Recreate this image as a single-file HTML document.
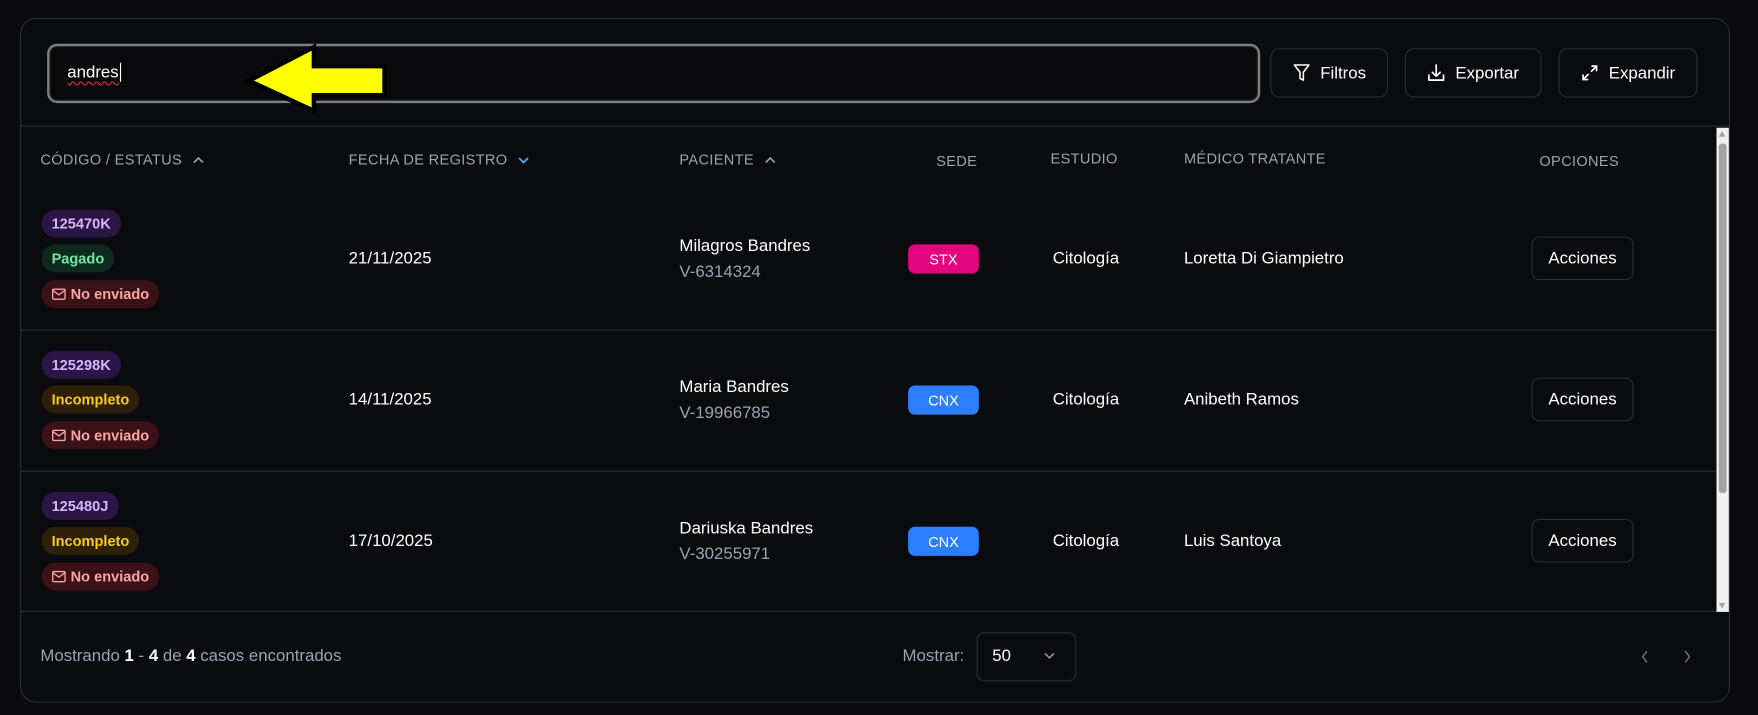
<!DOCTYPE html>
<html><head><meta charset="utf-8"><style>
*{box-sizing:border-box;margin:0;padding:0}
html,body{width:1758px;height:715px;overflow:hidden;background:#0a0a0c;font-family:"Liberation Sans",sans-serif;color:#fff}
#w{position:absolute;left:0;top:0;width:1568px;height:638px;transform:scale(1.12117,1.1207);transform-origin:0 0}
.card{position:absolute;left:18px;top:16px;width:1525px;height:611px;border:1px solid #2b2e35;border-radius:14px;background:#0a0b0e}
.abs{position:absolute}
.search{left:42px;top:39px;width:1082px;height:53px;border:2px solid #7d7f84;border-radius:9px;box-shadow:inset 0 0 0 1px #2a2c30;background:#09090b}
.stext{left:60px;top:56px;font-size:15px;color:#fff}
.stext span{text-decoration:underline wavy #e03030;text-underline-offset:3px;text-decoration-thickness:1px}
.btn{position:absolute;top:43px;height:44px;border:1px solid #2b2e35;border-radius:8px;font-size:15px;display:flex;align-items:center;justify-content:center;gap:9px;color:#fff}
.hl{position:absolute;left:19px;width:1512px;height:1px;background:#2b2e35}
.th{position:absolute;font-size:13px;color:#9ca3af;letter-spacing:.3px;display:flex;align-items:center}
.b{position:absolute;height:25px;border-radius:13px;font-size:13px;font-weight:bold;display:flex;align-items:center;padding:0 9px;gap:4px}
.code{background:#2a1545;color:#d8b4fe}
.pag{background:#0e2a1c;color:#6ee7a0}
.inc{background:#2e2008;color:#facc15}
.ne{background:#3a1116;color:#fca5a5}
.t15{position:absolute;font-size:15px;color:#fff}
.g{color:#9ca3af}
.sede{position:absolute;left:810px;width:63px;height:26px;border-radius:6px;font-size:13px;display:flex;align-items:center;justify-content:center;color:#fff}
.acc{position:absolute;left:1366px;width:91px;height:39px;border:1px solid #2b2e35;border-radius:7px;font-size:15px;display:flex;align-items:center;justify-content:center}
</style></head><body><div id="w">
<div class="card"></div>
<div class="abs search"></div>
<div class="abs stext"><span>andres</span><span style="text-decoration:none;border-left:1px solid #fff;margin-left:1px"></span></div>
<svg class="abs" style="left:215px;top:38px" width="135" height="66" viewBox="215 38 135 66"><polygon points="222,72 280,42 280,59 343,59 343,85 280,85 280,99" fill="#ffff00" stroke="#000" stroke-width="4" stroke-linejoin="miter"/></svg>
<div class="btn" style="left:1133px;width:105px"><svg width="16" height="18" viewBox="0 0 16 18" fill="none" stroke="#fff" stroke-width="1.4" stroke-linejoin="round"><path d="M1.5 2h13l-5 6.5v7l-3-1.5v-5.5z"/></svg>Filtros</div>
<div class="btn" style="left:1253px;width:122px"><svg width="16" height="18" viewBox="0 0 16 18" fill="none" stroke="#fff" stroke-width="1.5" stroke-linecap="round" stroke-linejoin="round"><path d="M8 2v10M4.5 8.5L8 12l3.5-3.5M1.5 11v4.5h13V11"/></svg>Exportar</div>
<div class="btn" style="left:1390px;width:124px"><svg width="16" height="16" viewBox="0 0 16 16" fill="none" stroke="#fff" stroke-width="1.5" stroke-linecap="round"><path d="M10 2h4v4M14 2L9.5 6.5M6 14H2v-4M2 14l4.5-4.5"/></svg>Expandir</div>
<div class="hl" style="top:112px;left:19px;width:1524px"></div>
<div class="th" style="left:36px;top:135px">CÓDIGO / ESTATUS <svg width="12" height="10" style="margin-left:9px" viewBox="0 0 12 10" fill="none" stroke="#9ca3af" stroke-width="1.5"><path d="M2 7l4-4 4 4"/></svg></div>
<div class="th" style="left:311px;top:135px">FECHA DE REGISTRO <svg width="12" height="10" style="margin-left:8px" viewBox="0 0 12 10" fill="none" stroke="#60a5fa" stroke-width="1.5"><path d="M2 3l4 4 4-4"/></svg></div>
<div class="th" style="left:606px;top:135px">PACIENTE <svg width="12" height="10" style="margin-left:9px" viewBox="0 0 12 10" fill="none" stroke="#9ca3af" stroke-width="1.5"><path d="M2 7l4-4 4 4"/></svg></div>
<div class="th" style="left:835px;top:136px">SEDE</div>
<div class="th" style="left:937px;top:134px">ESTUDIO</div>
<div class="th" style="left:1056px;top:134px">MÉDICO TRATANTE</div>
<div class="th" style="left:1373px;top:136px">OPCIONES</div>

<div class="hl" style="top:294px"></div>
<div class="hl" style="top:420px"></div>
<div class="hl" style="top:545px;width:1524px"></div>

<!-- row1 -->
<div class="b code" style="left:37px;top:187px">125470K</div>
<div class="b pag" style="left:37px;top:218px">Pagado</div>
<div class="b ne" style="left:37px;top:250px"><svg width="13" height="11" viewBox="0 0 13 11" fill="none" stroke="#fca5a5" stroke-width="1.2"><rect x="1" y="1" width="11" height="9" rx="1"/><path d="M1 2l5.5 4L12 2"/></svg>No enviado</div>
<div class="t15" style="left:311px;top:222px">21/11/2025</div>
<div class="t15" style="left:606px;top:211px">Milagros Bandres</div>
<div class="t15 g" style="left:606px;top:234px">V-6314324</div>
<div class="sede" style="top:218px;background:#e2057d">STX</div>
<div class="t15" style="left:939px;top:222px">Citología</div>
<div class="t15" style="left:1056px;top:222px">Loretta Di Giampietro</div>
<div class="acc" style="top:211px">Acciones</div>

<!-- row2 -->
<div class="b code" style="left:37px;top:313px">125298K</div>
<div class="b inc" style="left:37px;top:344px">Incompleto</div>
<div class="b ne" style="left:37px;top:376px"><svg width="13" height="11" viewBox="0 0 13 11" fill="none" stroke="#fca5a5" stroke-width="1.2"><rect x="1" y="1" width="11" height="9" rx="1"/><path d="M1 2l5.5 4L12 2"/></svg>No enviado</div>
<div class="t15" style="left:311px;top:348px">14/11/2025</div>
<div class="t15" style="left:606px;top:337px">Maria Bandres</div>
<div class="t15 g" style="left:606px;top:360px">V-19966785</div>
<div class="sede" style="top:344px;background:#2b7fff">CNX</div>
<div class="t15" style="left:939px;top:348px">Citología</div>
<div class="t15" style="left:1056px;top:348px">Anibeth Ramos</div>
<div class="acc" style="top:337px">Acciones</div>

<!-- row3 -->
<div class="b code" style="left:37px;top:439px">125480J</div>
<div class="b inc" style="left:37px;top:470px">Incompleto</div>
<div class="b ne" style="left:37px;top:502px"><svg width="13" height="11" viewBox="0 0 13 11" fill="none" stroke="#fca5a5" stroke-width="1.2"><rect x="1" y="1" width="11" height="9" rx="1"/><path d="M1 2l5.5 4L12 2"/></svg>No enviado</div>
<div class="t15" style="left:311px;top:474px">17/10/2025</div>
<div class="t15" style="left:606px;top:463px">Dariuska Bandres</div>
<div class="t15 g" style="left:606px;top:486px">V-30255971</div>
<div class="sede" style="top:470px;background:#2b7fff">CNX</div>
<div class="t15" style="left:939px;top:474px">Citología</div>
<div class="t15" style="left:1056px;top:474px">Luis Santoya</div>
<div class="acc" style="top:463px">Acciones</div>

<!-- scrollbar -->
<div class="abs" style="left:1531px;top:114px;width:11px;height:432px;background:#f1f1f1"></div>
<div class="abs" style="left:1533px;top:128px;width:7px;height:312px;background:#a3a3a3;border-radius:3px"></div>
<div class="abs" style="left:1533px;top:117px;width:0;height:0;border-left:3.5px solid transparent;border-right:3.5px solid transparent;border-bottom:5px solid #a3a3a3"></div>
<div class="abs" style="left:1533px;top:538px;width:0;height:0;border-left:3.5px solid transparent;border-right:3.5px solid transparent;border-top:5px solid #a3a3a3"></div>

<!-- footer -->
<div class="t15 g" style="left:36px;top:577px">Mostrando <b style="color:#fff">1</b> - <b style="color:#fff">4</b> de <b style="color:#fff">4</b> casos encontrados</div>
<div class="t15 g" style="left:805px;top:577px">Mostrar:</div>
<div class="abs" style="left:871px;top:564px;width:89px;height:44px;border:1px solid #2b2e35;border-radius:7px"></div>
<div class="t15" style="left:885px;top:577px">50</div>
<svg class="abs" style="left:930px;top:580px" width="12" height="10" viewBox="0 0 12 10" fill="none" stroke="#9ca3af" stroke-width="1.3"><path d="M2 3l4 4 4-4"/></svg>
<svg class="abs" style="left:1462px;top:578px" width="10" height="16" viewBox="0 0 10 16" fill="none" stroke="#6b7280" stroke-width="1.3"><path d="M7 3L3 8l4 5"/></svg>
<svg class="abs" style="left:1500px;top:578px" width="10" height="16" viewBox="0 0 10 16" fill="none" stroke="#6b7280" stroke-width="1.3"><path d="M3 3l4 5-4 5"/></svg>
</div></body></html>
